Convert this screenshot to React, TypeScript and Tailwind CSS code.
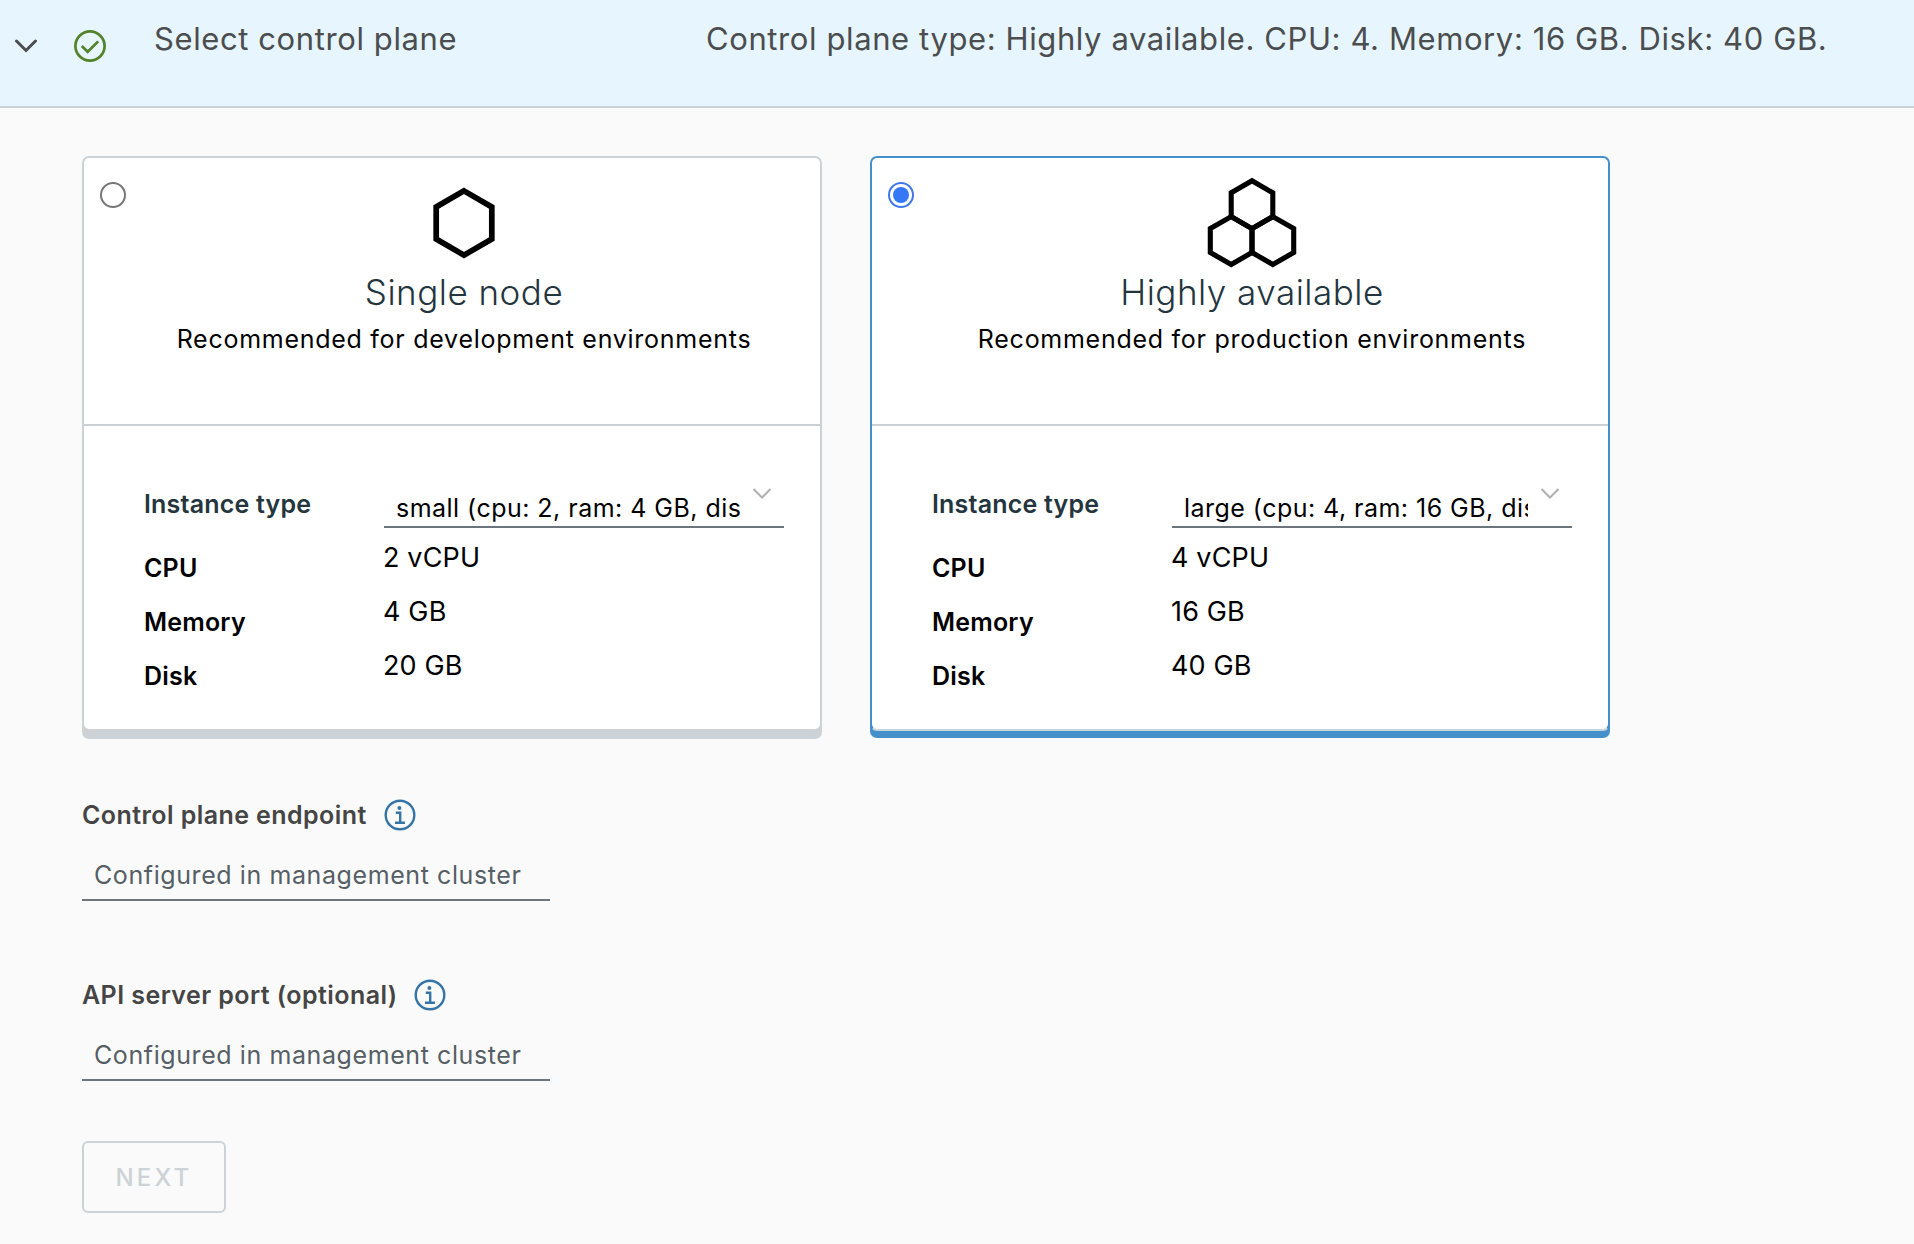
import React from "react";

type Plan = {
  title: string;
  description: string;
  option: string;
  cpu: string;
  memory: string;
  disk: string;
  selected: boolean;
};

const plans: Plan[] = [
  {
    title: "Single node",
    description: "Recommended for development environments",
    option: "small (cpu: 2, ram: 4 GB, dis",
    cpu: "2 vCPU",
    memory: "4 GB",
    disk: "20 GB",
    selected: false,
  },
  {
    title: "Highly available",
    description: "Recommended for production environments",
    option: "large (cpu: 4, ram: 16 GB, dis",
    cpu: "4 vCPU",
    memory: "16 GB",
    disk: "40 GB",
    selected: true,
  },
];

function SingleHexagon() {
  return (
    <svg className="size-[100px]" viewBox="0 0 100 100" fill="none" stroke="#000" strokeWidth="5.7">
      <path d="M50 18.9 77.8 35V67L50 83.1 22.2 67V35Z" />
    </svg>
  );
}

function TripleHexagon() {
  return (
    <svg className="size-[100px]" viewBox="0 0 100 100" fill="none" stroke="#000" strokeWidth="5.1">
      <path d="M50 8.8 70.8 20.8V44.6L50 56.6 29.2 44.6V20.8Z" />
      <path d="M29.2 44.6 50 56.6V80.5L29.2 92.5 8.3 80.5V56.6Z" />
      <path d="M70.8 44.6 91.7 56.6V80.5L70.8 92.5 50 80.5V56.6Z" />
    </svg>
  );
}

function InfoIcon() {
  return (
    <svg className="size-8" viewBox="-16 -16 32 32" fill="none" stroke="#3474a6" strokeWidth="2.4">
      <circle r="14.3" />
      <circle cx="-0.6" cy="-7" r="2" fill="#3474a6" stroke="none" />
      <path d="M-4.2 -2.2H0.2V7.7M-5 7.7H5" />
    </svg>
  );
}

function Radio({ checked }: { checked: boolean }) {
  return checked ? (
    <span className="flex size-[26px] items-center justify-center rounded-full border-2 border-[#3f78e8] bg-white">
      <span className="size-4 rounded-full bg-[#3478f6]" />
    </span>
  ) : (
    <span className="block size-[26px] rounded-full border-2 border-[#767676] bg-white" />
  );
}

function PlanCard({ plan }: { plan: Plan }) {
  return (
    <section
      className={
        plan.selected
          ? "h-[575px] w-[740px] rounded-[7px] border-2 border-[#4590ca] border-b-[#c5d5e0] bg-white shadow-[0_7px_0_0_#4590ca]"
          : "h-[575px] w-[740px] rounded-[7px] border-2 border-[#ccd2d5] bg-white shadow-[0_8px_0_0_#ccd2d5]"
      }
    >
      <header className="relative flex h-[268px] flex-col items-center border-b-2 border-[#ccd0d3] pt-[14px] pl-6">
        <div className="absolute top-6 left-4">
          <Radio checked={plan.selected} />
        </div>
        {plan.selected ? <TripleHexagon /> : <SingleHexagon />}
        <h2 className="text-[35px] leading-10 font-light tracking-[0.5px] text-[#24353e]">{plan.title}</h2>
        <p className="mt-[7px] text-[25px] leading-10 tracking-[0.73px] text-black">{plan.description}</p>
      </header>
      <div className="flex pt-[50px] pl-[60px] text-[25px]">
        <dl className="w-[240px] pt-px leading-[54px] font-semibold tracking-[0.2px] text-black">
          <dt className="mb-[10px] text-[#24353e]">Instance type</dt>
          <dt>CPU</dt>
          <dt>Memory</dt>
          <dt>Disk</dt>
        </dl>
        <div className="pt-[10px] text-black">
          <div className="flex h-[42px] w-[400px] border-b-2 border-[#6c757b] pt-1">
            <span className="w-[356px] overflow-hidden pl-3 leading-9 tracking-[0.47px] whitespace-nowrap">
              {plan.option}
            </span>
            <svg className="-mt-0.5 ml-3 h-3 w-5" viewBox="0 0 20 12" fill="none" stroke="#b0b0b0" strokeWidth="2">
              <path d="M1.5 1 10 9.5 18.5 1" />
            </svg>
          </div>
          <div className="mt-[3px] -ml-px text-[27px] leading-[54px] tracking-[0.15px]">
            <p>{plan.cpu}</p>
            <p>{plan.memory}</p>
            <p>{plan.disk}</p>
          </div>
        </div>
      </div>
    </section>
  );
}

function Field({ label }: { label: string }) {
  return (
    <div>
      <div className="flex h-10 items-center gap-[17px] text-[25px] font-semibold tracking-[0.43px] text-[#454545]">
        <span className="pt-0.5">{label}</span>
        <InfoIcon />
      </div>
      <div className="mt-4 h-[50px] w-[468px] border-b-2 border-[#6c757b] pl-3 text-[25px] leading-[48px] tracking-[0.59px] text-[#565f66]">
        Configured in management cluster
      </div>
    </div>
  );
}

export default function App() {
  return (
    <main className="h-[1244px] w-[1914px] overflow-hidden bg-[#fafafa] font-['Inter',sans-serif]">
      <header className="flex h-[108px] border-b-2 border-[#c8d3d9] bg-[#e6f5fe] pt-[19px] text-[31px] leading-10 tracking-[0.6px] text-[#4b4d4f]">
        <svg className="mt-5 ml-[14px] h-4 w-6" viewBox="0 0 24 16" fill="none" stroke="#4b4d4f" strokeWidth="3" strokeLinecap="round">
          <path d="M2.5 2 12 11.5 21.5 2" />
        </svg>
        <svg className="mt-[11px] ml-9 size-8" viewBox="-16 -16 32 32" fill="none" stroke="#52832a" strokeWidth="2.7">
          <circle r="14.6" />
          <path d="M-8.2 0 -2.3 5.8 8.2 -4.6" />
        </svg>
        <h1 className="ml-12 w-[552px]">Select control plane</h1>
        <p className="whitespace-nowrap">
          Control plane type: Highly available. CPU: 4. Memory: 16 GB. Disk: 40 GB.
        </p>
      </header>
      <div className="px-[82px] pt-12">
        <div className="flex gap-12">
          {plans.map((plan) => (
            <PlanCard key={plan.title} plan={plan} />
          ))}
        </div>
        <form className="mt-16">
          <Field label="Control plane endpoint" />
          <div className="mt-[74px]">
            <Field label="API server port (optional)" />
          </div>
          <button
            type="button"
            className="mt-[60px] flex h-[72px] w-36 items-center justify-center rounded-md border-2 border-[#ccd2d5] pt-0.5 text-[24px] font-medium tracking-[3.2px] text-[#ccd2d5]"
          >
            NEXT
          </button>
        </form>
      </div>
    </main>
  );
}
